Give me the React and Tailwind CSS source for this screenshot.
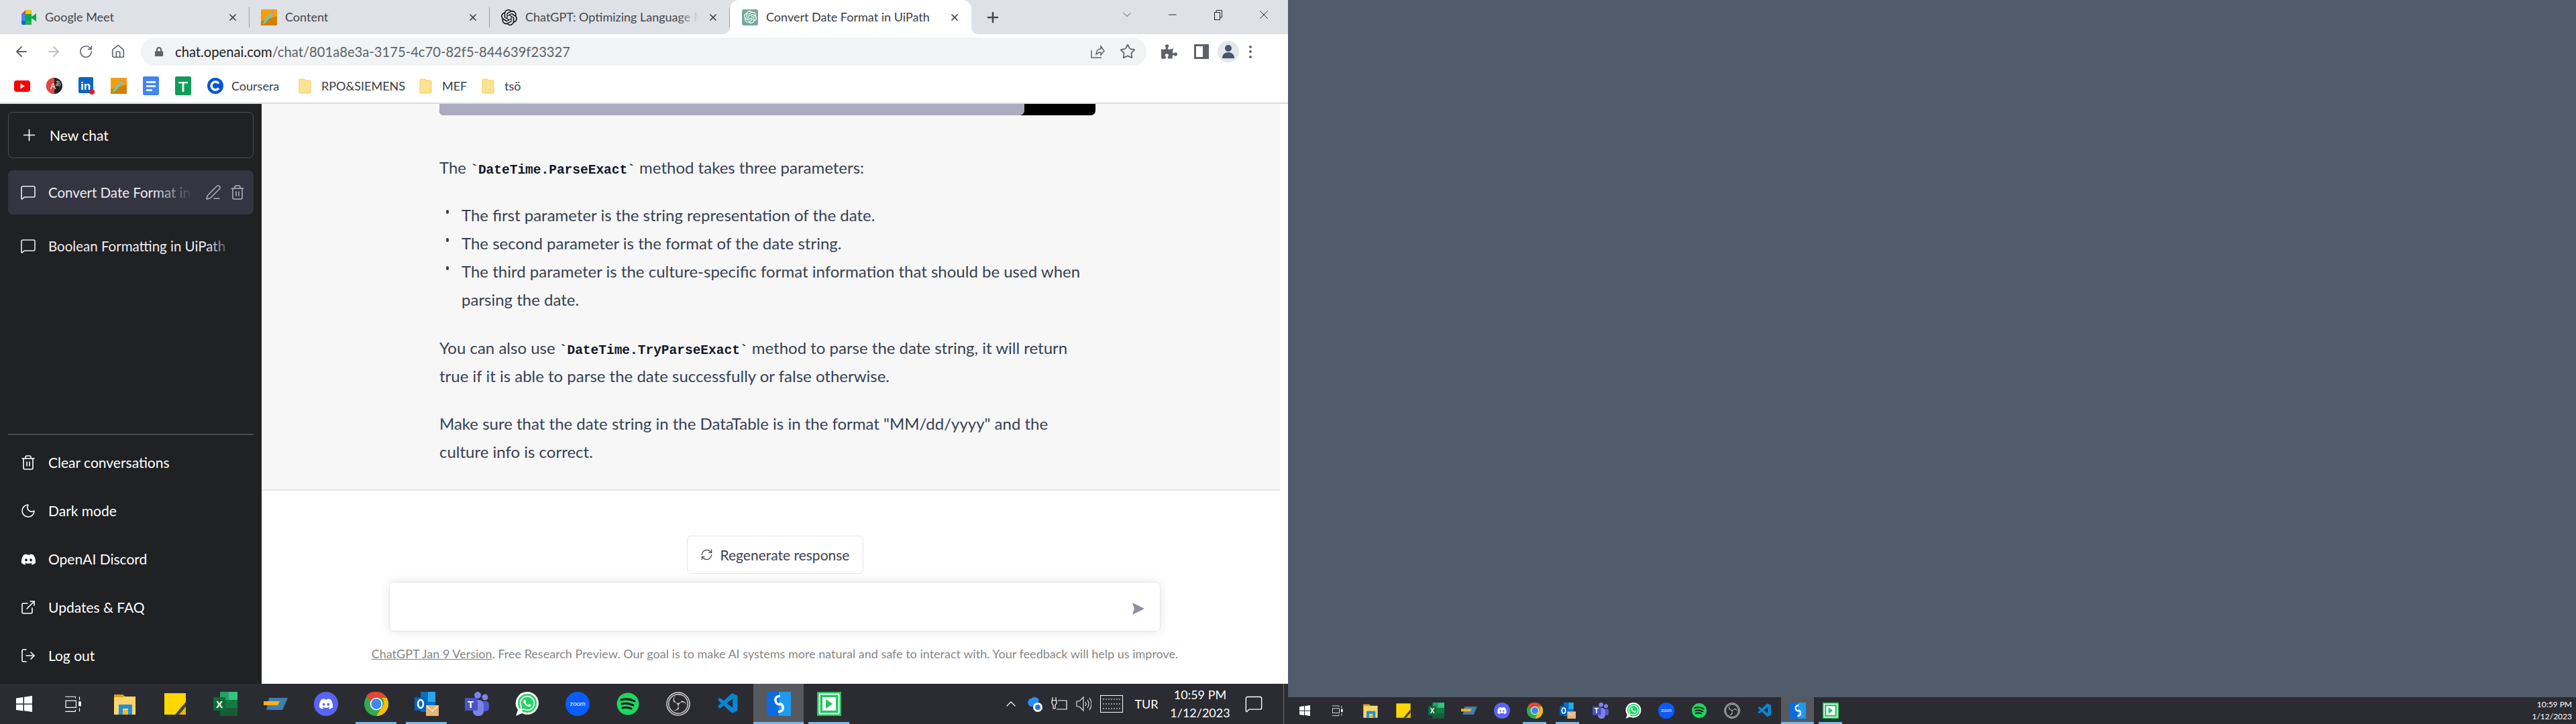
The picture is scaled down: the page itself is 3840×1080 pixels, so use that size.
import {
  ArrowLeft, ArrowRight, RotateCw, Home, Star, Plus, X, Minus, ChevronDown, ChevronUp,
  MessageSquare, PenLine, Trash2, Moon, ExternalLink, LogOut, RefreshCw, MessageSquare as Note,
} from 'lucide-react'
import { FaDiscord, FaWhatsapp, FaPuzzlePiece, FaLock } from 'react-icons/fa'
import { SiOpenai, SiObsstudio } from 'react-icons/si'
import { VscVscode } from 'react-icons/vsc'

const sans = "font-['Lato','Liberation_Sans',sans-serif]"

/* ---------- small logos ---------- */

const MeetIcon = () => (
  <svg width="24" height="24" viewBox="0 0 24 24" className="shrink-0">
    <path d="M1 7 7 1v6z" fill="#ea4335" />
    <path d="M7 1h9v6H7z" fill="#fbbc04" />
    <path d="M1 7h6v10H1z" fill="#4285f4" />
    <path d="M1 17h6v6H3a2 2 0 0 1-2-2z" fill="#1967d2" />
    <path d="M7 17h9v6H7z" fill="#34a853" />
    <path d="M7 7h9v4l7-5v12l-7-5v4H7z" fill="#00ac47" />
  </svg>
)

const PencilTile = () => (
  <svg width="24" height="24" viewBox="0 0 24 24" className="shrink-0">
    <rect width="24" height="24" fill="#f59e0b" />
    <path d="M0 24V17l6-1 18-6v14z" fill="#d17f06" />
    <path d="m17 2 3 2L7 20l-4 2 1-4z" fill="#5fd0c5" />
    <path d="m17 2 3 2-2 3-3-2z" fill="#f472b6" />
  </svg>
)

const GptTile = () => (
  <span className="w-[24px] h-[24px] shrink-0 bg-[#74aa9c] rounded-[3px] flex items-center justify-center">
    <SiOpenai size={19} color="#fff" />
  </span>
)

const Folder = () => (
  <svg width="19" height="23" viewBox="0 0 19 23" className="shrink-0">
    <path d="M1 2a1 1 0 0 1 1-1h6l3 2h6a1 1 0 0 1 1 1v17a1 1 0 0 1-1 1H2a1 1 0 0 1-1-1z" fill="#fde293" stroke="#f4cf5c" />
  </svg>
)

const BookmarkIcons = [
  <svg key="yt" width="24" height="17" viewBox="0 0 24 17"><rect width="24" height="17" rx="4" fill="#f00" /><path d="m9.5 4.5 6.5 4-6.5 4z" fill="#fff" /></svg>,
  <svg key="tr" width="24" height="24" viewBox="0 0 24 24"><circle cx="12" cy="12" r="12" fill="#222" /><path d="M12 0a12 12 0 0 0 0 24z" fill="#e8453c" /><text x="6" y="17" fontSize="12" fill="#fff" fontFamily="Liberation Sans">A</text><text x="13" y="12" fontSize="9" fill="#ddd" fontFamily="Noto Sans CJK SC">あ</text></svg>,
  <svg key="in" width="24" height="26" viewBox="0 0 24 26"><rect width="22" height="24" rx="2" fill="#0a66c2" /><text x="3" y="19" fontSize="17" fontWeight="700" fill="#fff" fontFamily="Liberation Sans">in</text><circle cx="20" cy="22" r="4" fill="#e11d2a" /></svg>,
  <PencilTile key="pen" />,
  <svg key="doc" width="24" height="28" viewBox="0 0 24 28"><rect width="24" height="28" rx="2" fill="#4285f4" /><path d="M5 7h14v3H5zM5 13h14v3H5zM5 19h9v3H5z" fill="#e8f0fe" /></svg>,
  <svg key="sheet" width="24" height="28" viewBox="0 0 24 28"><rect width="24" height="28" rx="2" fill="#0f9d58" /><path d="M5 8h14v2.500H5zM10.500 8h3v15h-3z" fill="#e6f4ea" /></svg>,
  <svg key="cou" width="24" height="24" viewBox="0 0 24 24"><circle cx="12" cy="12" r="12" fill="#0056d2" /><path d="M17 15.500a6 6 0 1 1 0-7" fill="none" stroke="#fff" strokeWidth="3.500" /></svg>,
]

/* ---------- taskbar icons, all drawn on a 36 grid ---------- */

const Start = ({ s }) => (
  <svg width={s} height={s} viewBox="0 0 36 36">
    <path d="M6 9.500 16.500 8v9.500H6zM18 7.800 30 6v11.500H18zM6 19h10.500v9.500L6 27zM18 19h12v11l-12-1.800z" fill="#fff" />
  </svg>
)
const TaskView = ({ s }) => (
  <svg width={s * 0.85} height={s * 0.85} viewBox="0 0 36 36" fill="none" stroke="#fff" strokeWidth="1.400">
    <path d="M5 5h18M23 5v3M5 31h18M23 31v-3" />
    <rect x="6" y="12" width="18" height="12" />
    <path d="M30 5v6M30 25v6" />
    <rect x="29" y="14" width="3" height="7" fill="#fff" />
  </svg>
)
const Explorer = ({ s }) => (
  <svg width={s} height={s} viewBox="0 0 36 36">
    <path d="M2 4h13l3 3h16v27H2z" fill="#fcd66b" />
    <path d="M2 4h13l2 4H2z" fill="#e0a10f" />
    <path d="M9 34V19h20v15h-6v-9h-8v9z" fill="#1f8fe0" />
    <rect x="15" y="27" width="8" height="7" fill="#f5b81f" />
  </svg>
)
const Sticky = ({ s }) => (
  <svg width={s} height={s} viewBox="0 0 36 36">
    <rect x="2" y="2" width="32" height="32" fill="#ffd800" />
    <path d="M34 16v18H18z" fill="#f0b400" />
    <path d="M34 15 18 34h6l10-12z" fill="#444" />
  </svg>
)
const Excel = ({ s }) => (
  <svg width={s} height={s} viewBox="0 0 36 36">
    <rect x="10" y="0" width="26" height="36" rx="1" fill="#21a366" />
    <rect x="23" y="0" width="13" height="12" fill="#33c481" />
    <rect x="10" y="12" width="26" height="12" fill="#107c41" />
    <rect x="10" y="24" width="26" height="12" fill="#185c37" />
    <rect x="0" y="8" width="18" height="20" rx="1" fill="#0f6b3a" />
    <text x="4" y="24" fontSize="15" fontWeight="700" fill="#fff" fontFamily="Liberation Sans">X</text>
  </svg>
)
const Slanted = ({ s }) => (
  <svg width={s} height={s} viewBox="0 0 36 36">
    <path d="M8 9h28l-8 18H4z" fill="#3f7fae" />
    <path d="M0 14h24l-3 6H0z" fill="#f9b21a" />
  </svg>
)
const Discord = ({ s }) => (
  <svg width={s} height={s} viewBox="0 0 36 36">
    <circle cx="18" cy="18" r="18" fill="#5865f2" />
    <FaDiscord x="7" y="7" size={22} color="#fff" />
  </svg>
)
const Chrome = ({ s }) => (
  <svg width={s} height={s} viewBox="0 0 36 36">
    <circle cx="18" cy="18" r="18" fill="#34a853" />
    <path d="M18 0a18 18 0 0 1 15.600 9H18a9 9 0 0 0-8 5L3 6A18 18 0 0 1 18 0" fill="#ea4335" />
    <path d="M33.600 9A18 18 0 0 1 18 36l8-13a9 9 0 0 0 0-14z" fill="#fbbc04" />
    <circle cx="18" cy="18" r="8.500" fill="#4285f4" stroke="#fff" strokeWidth="1.600" />
  </svg>
)
const Outlook = ({ s }) => (
  <svg width={s} height={s} viewBox="0 0 36 36">
    <rect x="9" y="0" width="22" height="30" fill="#0a6cc4" />
    <rect x="20" y="0" width="11" height="15" fill="#28a8ea" />
    <rect x="0" y="8" width="18" height="20" rx="1" fill="#0364b8" />
    <ellipse cx="9" cy="18" rx="4" ry="6" fill="none" stroke="#fff" strokeWidth="2.500" />
    <rect x="17" y="20" width="19" height="16" fill="#e8b574" />
    <path d="m18 21 8.500 8 8.500-8" fill="none" stroke="#fff" strokeWidth="1.200" />
  </svg>
)
const Teams = ({ s }) => (
  <svg width={s} height={s} viewBox="0 0 36 36">
    <circle cx="30" cy="8" r="4.500" fill="#7b83eb" />
    <circle cx="19" cy="5" r="5" fill="#7b83eb" />
    <rect x="24" y="14" width="12" height="15" rx="5" fill="#5059c9" />
    <rect x="12" y="12" width="16" height="24" rx="7" fill="#7b83eb" />
    <rect x="0" y="9" width="19" height="19" rx="1" fill="#4b53bc" />
    <text x="4" y="24" fontSize="15" fontWeight="700" fill="#fff" fontFamily="Liberation Sans">T</text>
  </svg>
)
const Whatsapp = ({ s }) => (
  <svg width={s} height={s} viewBox="0 0 36 36">
    <path d="M18 0a17 17 0 0 1 0 34 17 17 0 0 1-8-2l-9 4 3-9a17 17 0 0 1 14-27" fill="#fff" />
    <circle cx="18" cy="17" r="14" fill="#25d366" />
    <FaWhatsapp x="5" y="4" size={26} color="#fff" />
  </svg>
)
const Zoom = ({ s }) => (
  <svg width={s} height={s} viewBox="0 0 36 36">
    <circle cx="18" cy="18" r="18" fill="#0b5cff" />
    <text x="18" y="21" textAnchor="middle" fontSize="9.500" fill="#fff" fontFamily="Liberation Sans">zoom</text>
  </svg>
)
const Spotify = ({ s }) => (
  <svg width={s} height={s} viewBox="0 0 36 36">
    <circle cx="18" cy="18" r="16.500" fill="#1ed760" />
    <path d="M8 12q10-3 20 2M9 18q9-2 17 2M10 24q7-2 13 1" fill="none" stroke="#111" strokeWidth="3" strokeLinecap="round" />
  </svg>
)
const Obs = ({ s }) => (
  <svg width={s} height={s} viewBox="0 0 36 36">
    <circle cx="18" cy="18" r="17" fill="#2a2a2e" stroke="#d8d8d8" strokeWidth="1.500" />
    <SiObsstudio x="3" y="3" size={30} color="#d8d8d8" />
  </svg>
)
const Vscode = ({ s }) => (
  <svg width={s} height={s} viewBox="0 0 36 36">
    <VscVscode x="0" y="0" size={36} color="#0a85d1" />
  </svg>
)
const Simplenote = ({ s }) => (
  <svg width={s} height={s} viewBox="0 0 36 36">
    <rect width="36" height="36" fill="#0a6ce0" />
    <rect x="18" width="18" height="36" fill="#1d9bf0" />
    <path d="M20 6q-8 1-7 7t7 6" fill="none" stroke="#fff" strokeWidth="3.500" />
    <path d="M17 30q8-1 7-7t-5-5" fill="none" stroke="#fff" strokeWidth="3.500" />
  </svg>
)
const GreenPlay = ({ s }) => (
  <svg width={s} height={s} viewBox="0 0 36 36">
    <rect width="36" height="36" fill="#22c55e" />
    <rect x="3.500" y="3.500" width="29" height="29" fill="none" stroke="#fff" strokeWidth="2" />
    <rect x="8" y="8" width="20" height="20" fill="#fff" />
    <path d="m13 11 10 7-10 7z" fill="#22c55e" />
  </svg>
)

const apps = [
  { Icon: Explorer }, { Icon: Sticky }, { Icon: Excel }, { Icon: Slanted }, { Icon: Discord },
  { Icon: Chrome, open: true }, { Icon: Outlook, open: true }, { Icon: Teams }, { Icon: Whatsapp },
  { Icon: Zoom }, { Icon: Spotify }, { Icon: Obs }, { Icon: Vscode },
  { Icon: Simplenote, active: true }, { Icon: GreenPlay, open: true },
]

function AppCell({ app, cellClass, size }) {
  const { Icon, open, active } = app
  return (
    <div className={`relative h-full shrink-0 flex items-center justify-center ${cellClass} ${active ? 'bg-[#57595e]' : ''}`}>
      <Icon s={size} />
      {active && <div className="absolute bottom-0 inset-x-0 h-[3px] bg-[#76b9ed]" />}
      {open && <div className="absolute bottom-0 inset-x-[7px] h-[3px] bg-[#76b9ed]" />}
    </div>
  )
}

function Tab({ icon, title, fade }) {
  return (
    <div className="w-[358px] h-[51px] shrink-0 flex items-center pl-[17px] pr-[16px]">
      {icon}
      <div className="relative flex-1 min-w-0 ml-[12px] mr-[14px] overflow-hidden whitespace-nowrap text-[18px] text-[#45474b]">
        {title}
        {fade && <div className="absolute inset-y-0 right-0 w-[30px] bg-gradient-to-l from-[#dee1e6]" />}
      </div>
      <X size={16} strokeWidth={2.6} color="#3c4043" className="shrink-0" />
      <div className="w-px h-[30px] bg-[#9aa0a6] ml-[16px] -mr-[16px] shrink-0" />
    </div>
  )
}

function ChromeBar() {
  return (
    <div className="shrink-0">
      {/* tab strip */}
      <div className="h-[51px] bg-[#dee1e6] flex items-center pl-[14px]">
        <Tab icon={<MeetIcon />} title="Google Meet" />
        <Tab icon={<PencilTile />} title="Content" />
        <Tab icon={<SiOpenai size={24} color="#111" className="shrink-0" />} title="ChatGPT: Optimizing Language Models" fade />
        <div className="relative w-[360px] h-[51px] shrink-0 flex items-center pl-[18px] pr-[17px] bg-white rounded-t-[14px]">
          <div className="absolute bottom-0 -left-[10px] w-[10px] h-[10px] bg-white">
            <div className="w-full h-full bg-[#dee1e6] rounded-br-[10px]" />
          </div>
          <div className="absolute bottom-0 -right-[10px] w-[10px] h-[10px] bg-white">
            <div className="w-full h-full bg-[#dee1e6] rounded-bl-[10px]" />
          </div>
          <GptTile />
          <div className="flex-1 ml-[12px] whitespace-nowrap text-[18px] text-[#3c4043]">Convert Date Format in UiPath</div>
          <X size={16} strokeWidth={2.6} color="#3c4043" />
        </div>
        <Plus size={24} strokeWidth={2.6} color="#45474b" className="ml-[20px]" />
        <div className="ml-auto flex items-center h-full pb-[8px] pr-[2px]">
          <div className="w-[68px] flex justify-center"><ChevronDown size={20} strokeWidth={1} color="#333" /></div>
          <div className="w-[68px] flex justify-center"><Minus size={18} strokeWidth={1.2} color="#111" /></div>
          <div className="w-[68px] flex justify-center">
            <svg width="16" height="16" viewBox="0 0 16 16" fill="none" stroke="#222"><rect x="2.500" y="4.500" width="8" height="11" /><path d="M5 4V1.500h8.500V12H11" /></svg>
          </div>
          <div className="w-[68px] flex justify-center"><X size={22} strokeWidth={1} color="#111" /></div>
        </div>
      </div>

      {/* toolbar */}
      <div className="h-[52px] bg-white flex items-center pl-[8px]">
        <div className="w-[48px] flex justify-center"><ArrowLeft size={24} strokeWidth={1.8} color="#5f6368" /></div>
        <div className="w-[48px] flex justify-center"><ArrowRight size={24} strokeWidth={1.8} color="#bdc1c6" /></div>
        <div className="w-[48px] flex justify-center"><RotateCw size={22} strokeWidth={1.8} color="#5f6368" /></div>
        <div className="w-[48px] flex justify-center"><Home size={22} strokeWidth={1.8} color="#5f6368" /></div>
        <div className="w-[1499px] ml-[10px] h-[42px] rounded-full bg-[#f1f3f4] flex items-center pl-[20px] pr-[16px]">
          <FaLock size={14} color="#5f6368" />
          <div className="ml-[17px] text-[20.200px] whitespace-nowrap text-[#5f6368]">
            <span className="text-[#202124]">chat.openai.com</span>/chat/801a8e3a-3175-4c70-82f5-844639f23327
          </div>
          <svg width="24" height="24" viewBox="0 0 24 24" fill="none" stroke="#5f6368" strokeWidth="1.500" className="ml-auto">
            <path d="M4 10v11h15M11 16c0-5 3-8 7-8V4l5 7-5 6v-4c-3 0-5 1-7 3z" />
          </svg>
          <Star size={24} strokeWidth={1.8} color="#5f6368" className="ml-[22px]" />
        </div>
        <div className="ml-[22px] w-[24px] flex justify-center"><FaPuzzlePiece size={24} color="#5f6368" /></div>
        <div className="ml-[24px] w-[24px] flex justify-center">
          <svg width="22" height="22" viewBox="0 0 22 22"><path d="M0 0h22v22H0zM3 3v16h10V3z" fill="#5f6368" fillRule="evenodd" /></svg>
        </div>
        <div className="ml-[12px] w-[32px] h-[32px] rounded-full bg-[#e3e6eb] flex items-center justify-center">
          <svg width="22" height="24" viewBox="0 0 22 24" fill="#48566b"><circle cx="11" cy="7" r="5" /><path d="M2 22c0-6 4-9 9-9s9 3 9 9z" /></svg>
        </div>
        <div className="ml-[15px] flex flex-col gap-[3.500px]">
          <span className="w-[4px] h-[4px] rounded-full bg-[#5f6368]" />
          <span className="w-[4px] h-[4px] rounded-full bg-[#5f6368]" />
          <span className="w-[4px] h-[4px] rounded-full bg-[#5f6368]" />
        </div>
      </div>

      {/* bookmarks */}
      <div className="h-[50px] bg-white flex items-center pl-[9px] text-[18px] text-[#3c4043]">
        {BookmarkIcons.map((icon, i) => (
          <div key={i} className="w-[48px] flex justify-center">{icon}</div>
        ))}
        <span className="w-[100px]">Coursera</span>
        <Folder />
        <span className="ml-[15px] w-[146px] whitespace-nowrap">RPO&amp;SIEMENS</span>
        <Folder />
        <span className="ml-[15px] w-[59px]">MEF</span>
        <Folder />
        <span className="ml-[15px]">tsö</span>
      </div>
      <div className="h-[2px] bg-[#dddddd]" />
    </div>
  )
}

function SideRow({ icon, children }) {
  return (
    <div className="h-[72px] flex items-center pl-[18px] text-[21px] text-white">
      <span className="w-[24px] h-[24px] shrink-0 flex items-center justify-center">{icon}</span>
      <span className="ml-[18px]">{children}</span>
    </div>
  )
}

function Sidebar() {
  return (
    <aside className="w-[390px] shrink-0 bg-[#202123] flex flex-col px-[12px] pt-[12px] pb-[6px]">
      <div className="h-[69px] shrink-0 rounded-[7px] border border-white/20 flex items-center pl-[17px] text-[21px] text-white">
        <Plus size={27} strokeWidth={1.5} />
        <span className="ml-[17px]">New chat</span>
      </div>

      <div className="mt-[18px] h-[66px] shrink-0 rounded-[7px] bg-[#343541] flex items-center pl-[18px] pr-[12px] text-[20.500px] text-[#ececf1]">
        <MessageSquare size={24} strokeWidth={1.6} className="shrink-0" />
        <div className="relative ml-[18px] w-[216px] overflow-hidden whitespace-nowrap">
          Convert Date Format in UiPath
          <div className="absolute inset-y-0 right-0 w-[60px] bg-gradient-to-l from-[#343541]" />
        </div>
        <PenLine size={24} strokeWidth={1.5} color="#b4b4be" className="ml-auto" />
        <Trash2 size={24} strokeWidth={1.5} color="#b4b4be" className="ml-[12px]" />
      </div>

      <div className="mt-[14px] h-[66px] shrink-0 flex items-center pl-[18px] text-[20.500px] text-[#ececf1]">
        <MessageSquare size={24} strokeWidth={1.6} className="shrink-0" />
        <div className="relative ml-[18px] w-[274px] overflow-hidden whitespace-nowrap">
          Boolean Formatting in UiPath
          <div className="absolute inset-y-0 right-0 w-[36px] bg-gradient-to-l from-[#202123]" />
        </div>
      </div>

      <div className="flex-1" />
      <div className="h-[2px] shrink-0 bg-white/20 mb-[5px]" />
      <SideRow icon={<Trash2 size={24} strokeWidth={1.6} />}>Clear conversations</SideRow>
      <SideRow icon={<Moon size={24} strokeWidth={1.6} />}>Dark mode</SideRow>
      <SideRow icon={<FaDiscord size={23} />}>OpenAI Discord</SideRow>
      <SideRow icon={<ExternalLink size={24} strokeWidth={1.6} />}>Updates &amp; FAQ</SideRow>
      <SideRow icon={<LogOut size={24} strokeWidth={1.6} />}>Log out</SideRow>
    </aside>
  )
}

const Code = ({ children }) => (
  <code className="font-['Liberation_Mono',monospace] font-bold text-[19.500px] leading-none text-[#111827]">`{children}`</code>
)

const Bullet = () => (
  <span className="w-[33px] shrink-0 pl-[10px] pt-[13px]">
    <span className="block w-[4px] h-[6px] rounded-full bg-[#374151]" />
  </span>
)

function Chat() {
  return (
    <main className="flex-1 flex flex-col min-w-0">
      <div className="h-[577px] shrink-0 flex">
        <div className="flex-1 bg-[#f7f7f8] border-b-2 border-[#e5e5e6] pl-[265px] text-[24px] leading-[42px] text-[#374151]">
          <div className="w-[978px] h-[17px] flex bg-black rounded-b-[7px] overflow-hidden">
            <div className="w-[872px] bg-[#acacbe] rounded-br-[7px]" />
          </div>
          <p className="mt-[57px]">The <Code>DateTime.ParseExact</Code> method takes three parameters:</p>
          <ul className="mt-[29px]">
            <li className="flex"><Bullet />The first parameter is the string representation of the date.</li>
            <li className="flex"><Bullet />The second parameter is the format of the date string.</li>
            <li className="flex">
              <Bullet />
              <span>The third parameter is the culture-specific format information that should be used when<br />parsing the date.</span>
            </li>
          </ul>
          <p className="mt-[30px]">You can also use <Code>DateTime.TryParseExact</Code> method to parse the date string, it will return<br />true if it is able to parse the date successfully or false otherwise.</p>
          <p className="mt-[29px]">Make sure that the date string in the DataTable is in the format "MM/dd/yyyy" and the<br />culture info is correct.</p>
        </div>
        <div className="w-[12px] bg-white" />
      </div>

      <div className="flex-1 bg-white flex flex-col items-center">
        <div className="mt-[67px] w-[263px] h-[57px] rounded-[6px] border border-[#e5e5e6] flex items-center justify-center text-[21px] text-[#40414f]">
          <RefreshCw size={19} strokeWidth={1.5} />
          <span className="ml-[11px]">Regenerate response</span>
        </div>
        <div className="mt-[12px] w-[1150px] h-[74px] rounded-[7px] border border-black/10 shadow-[0_0_15px_rgba(0,0,0,0.1)] flex items-center justify-end pr-[22px] pt-[6px]">
          <svg width="20" height="20" viewBox="0 0 20 20" fill="#8e8ea0"><path d="M1 1l18 9-18 9 3-9zM5 9h6v2H5z" /></svg>
        </div>
        <p className="mt-[20px] text-[18px] text-black/50 whitespace-nowrap">
          <span className="underline">ChatGPT Jan 9 Version</span>. Free Research Preview. Our goal is to make AI systems more natural and safe to interact with. Your feedback will help us improve.
        </p>
      </div>
    </main>
  )
}

function MainTaskbar() {
  return (
    <div className="h-[60px] shrink-0 bg-[#2a2c31] flex items-center text-white">
      <div className="w-[72px] h-full flex items-center justify-center"><Start s={36} /></div>
      <div className="w-[72px] h-full flex items-center justify-center"><TaskView s={36} /></div>
      <div className="w-[4px]" />
      {apps.map((app, i) => <AppCell key={i} app={app} cellClass="w-[75px]" size={36} />)}
      <div className="ml-auto h-full flex items-center">
        <div className="w-[36px] flex justify-center"><ChevronUp size={24} strokeWidth={1.2} /></div>
        <div className="w-[36px] flex justify-center">
          <svg width="26" height="28" viewBox="0 0 26 28"><path d="M4 16a6 6 0 0 1 3-10 7 7 0 0 1 12 3l-6 9H6z" fill="#1e90ff" /><circle cx="17" cy="19" r="7" fill="#fff" /><circle cx="17" cy="19" r="4" fill="#2a78d6" /></svg>
        </div>
        <div className="w-[36px] flex justify-center">
          <svg width="24" height="24" viewBox="0 0 24 24" fill="none" stroke="#fff" strokeWidth="1.200"><path d="M2 2v5M7 2v5M1 7h7v4l-2 3v5H3v-5l-2-3zM10 7h13v13H8" /></svg>
        </div>
        <div className="w-[36px] flex justify-center">
          <svg width="24" height="26" viewBox="0 0 24 26" fill="none" stroke="#ddd" strokeWidth="1.200"><path d="M2 9v8h4l6 6V3L6 9zM15 10q2 3 0 6M18 7q4 6 0 12M21 4q6 9 0 18" /></svg>
        </div>
        <div className="w-[48px] flex justify-center">
          <svg width="34" height="26" viewBox="0 0 34 26" fill="none" stroke="#fff"><rect x=".5" y=".5" width="33" height="25" /><path d="M4 6h26M4 13h26M4 20h26" strokeDasharray="2 2" /></svg>
        </div>
        <div className="w-[56px] text-center text-[18px]">TUR</div>
        <div className="w-[104px] text-center text-[18px] leading-[27px]">
          <div>10:59 PM</div>
          <div>1/12/2023</div>
        </div>
        <div className="w-[56px] flex justify-center"><Note size={28} strokeWidth={1.2} /></div>
        <div className="w-[16px]" />
        <div className="w-px h-full bg-[#6e7073]" />
        <div className="w-[6px]" />
      </div>
    </div>
  )
}

function SecondTaskbar() {
  return (
    <div className="h-[40px] shrink-0 bg-[#2a2c31] flex items-center text-white">
      <div className="w-[49px] h-full flex items-center justify-center"><Start s={24} /></div>
      <div className="w-[49px] h-full flex items-center justify-center"><TaskView s={24} /></div>
      {apps.map((app, i) => <AppCell key={i} app={app} cellClass="w-[49px]" size={24} />)}
      <div className="ml-auto pr-[6px] text-[12px] leading-[18px] text-right">
        <div>10:59 PM</div>
        <div>1/12/2023</div>
      </div>
    </div>
  )
}

export default function App() {
  return (
    <div className={`w-[3840px] h-[1080px] flex overflow-hidden ${sans}`}>
      <div className="w-[1920px] shrink-0 flex flex-col">
        <ChromeBar />
        <div className="flex-1 flex min-h-0">
          <Sidebar />
          <Chat />
        </div>
        <MainTaskbar />
      </div>
      <div className="flex-1 flex flex-col">
        <div className="flex-1 bg-[#515c6b]" />
        <SecondTaskbar />
      </div>
    </div>
  )
}
